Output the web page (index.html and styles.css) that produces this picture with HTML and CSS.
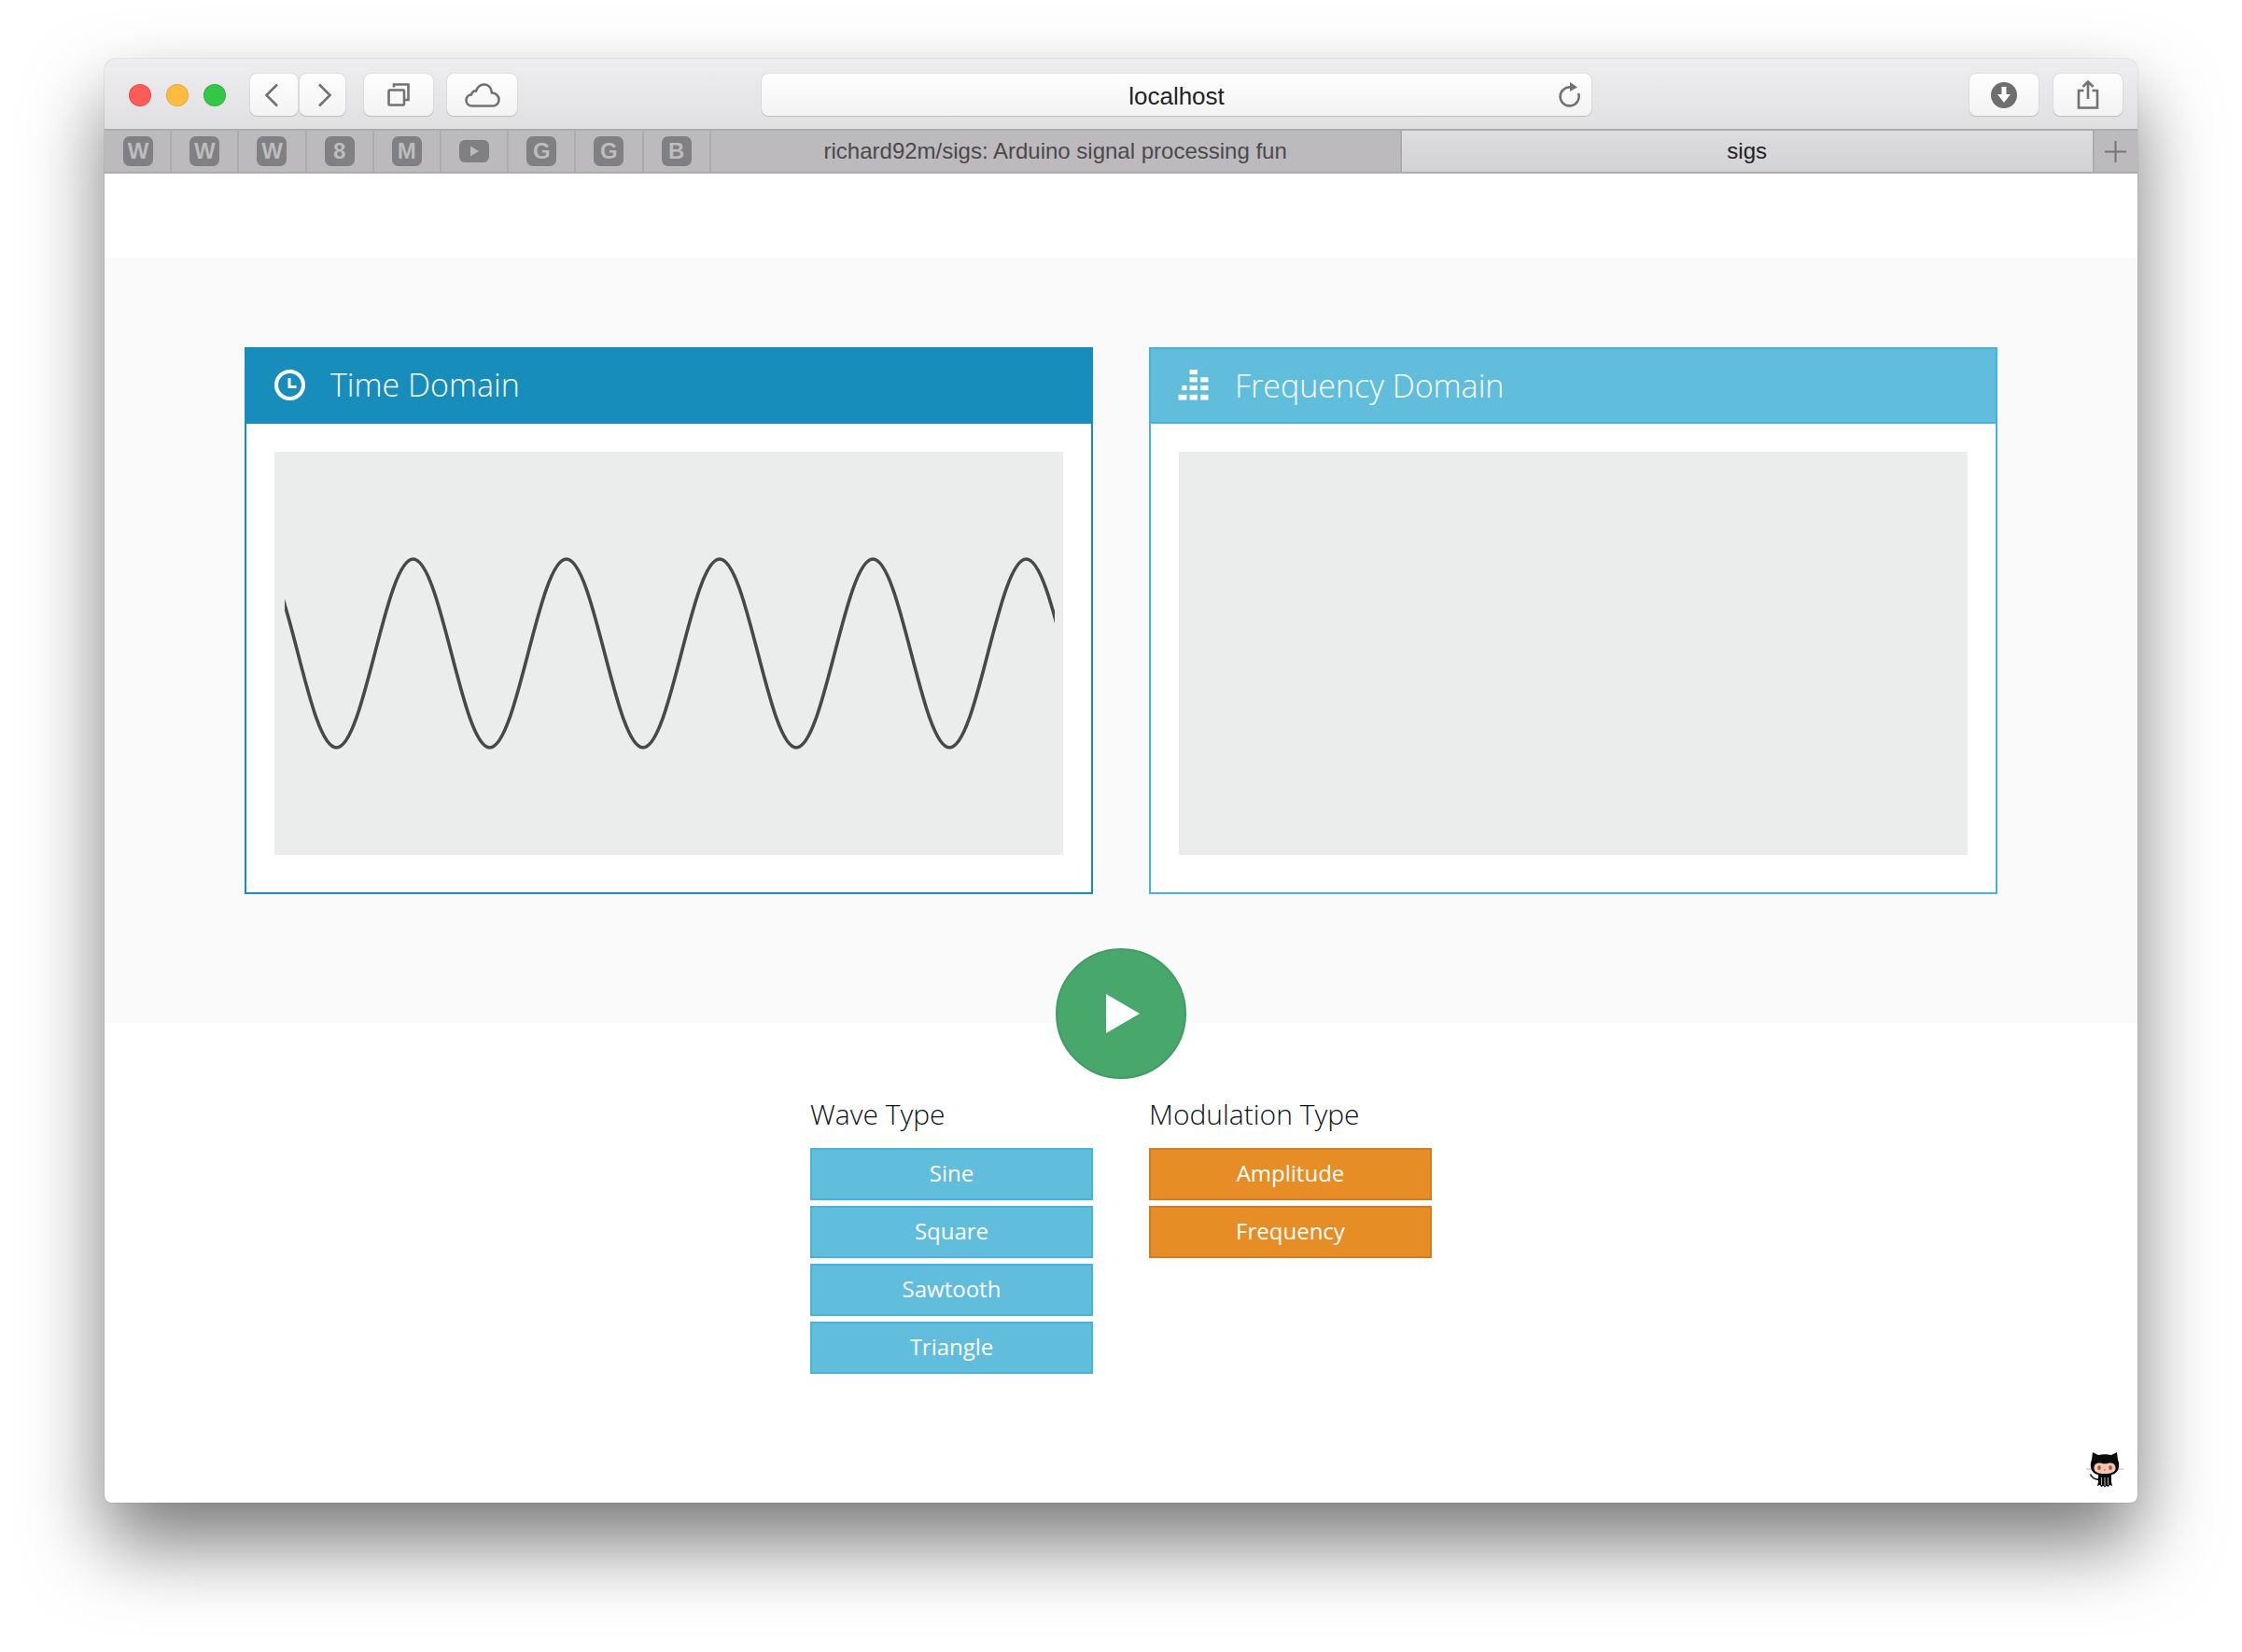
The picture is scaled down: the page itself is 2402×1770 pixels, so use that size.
FILE: index.html
```html
<!DOCTYPE html>
<html>
  <head>
    <meta charset="utf-8" />
    <title>sigs</title>
    <link rel="stylesheet" href="styles.css">
  </head>
  <body>
    <div class="window">
      <header class="toolbar">
        <div class="lights">
          <span class="light red"></span>
          <span class="light yellow"></span>
          <span class="light green"></span>
        </div>
        <div class="tool tool-back">
          <svg class="icon" width="16" height="26" viewBox="0 0 16 26"><path d="M14 1.5 L2.5 13 L14 24.5"/></svg>
        </div>
        <div class="tool tool-forward">
          <svg class="icon" width="16" height="26" viewBox="0 0 16 26"><path d="M2 1.5 L13.5 13 L2 24.5"/></svg>
        </div>
        <div class="tool tool-tabs">
          <svg class="icon" width="24" height="25" viewBox="0 0 24 25"><path d="M7 4.5 V1.5 H22.5 V18 H19"/><rect x="1.5" y="7.5" width="16.5" height="16" rx="1"/></svg>
        </div>
        <div class="tool tool-cloud">
          <svg class="icon" width="38" height="26" viewBox="0 0 38 26"><path d="M8 24.5 C3.5 24.5 1.5 21.5 1.5 18.5 C1.5 15 4 12.5 7 12.5 C7.5 9.5 10 8 12 8.5 C14 3.5 17.5 1.5 20.5 1.5 C25.5 1.5 28.5 5.5 29 10.5 C33.5 10.5 36.5 14 36.5 18 C36.5 21.5 33.5 24.5 30 24.5 Z"/></svg>
        </div>
        <div class="address">
          <span></span>
          <span class="address-text">localhost</span>
          <svg class="icon reload" width="25" height="27" viewBox="0 0 25 27"><path d="M14 5.5 A10 10 0 1 0 22 12"/><path class="solid" d="M13 0 L21 5.5 L13 10 Z"/></svg>
        </div>
        <div class="tool tool-download">
          <svg width="28" height="28" viewBox="0 0 28 28"><circle cx="14" cy="14" r="14" fill="#6f6f6f"/><path d="M11.5 5 H16.5 V13 H21 L14 22 L7 13 H11.5 Z" fill="#fbfbfb"/></svg>
        </div>
        <div class="tool tool-share">
          <svg class="icon" width="24" height="31" viewBox="0 0 24 31"><path d="M7.5 11 H2 V29.5 H22 V11 H16.5"/><path d="M12 20 V2 M6.5 7 L12 1.5 L17.5 7"/></svg>
        </div>
      </header>
      <nav class="tabs">
        <div class="pin"><span class="badge">W</span></div>
        <div class="pin"><span class="badge">W</span></div>
        <div class="pin"><span class="badge">W</span></div>
        <div class="pin"><span class="badge">8</span></div>
        <div class="pin"><span class="badge">M</span></div>
        <div class="pin">
          <svg width="32" height="24" viewBox="0 0 32 24"><rect width="32" height="24" rx="6" fill="#807f81"/><path d="M12 6.5 L21 12 L12 17.5 Z" fill="#bcbabd"/></svg>
        </div>
        <div class="pin"><span class="badge">G</span></div>
        <div class="pin"><span class="badge">G</span></div>
        <div class="pin"><span class="badge">B</span></div>
        <div class="tab">richard92m/sigs: Arduino signal processing fun</div>
        <div class="tab tab-active">sigs</div>
        <div class="tab-add">
          <svg width="23" height="23" viewBox="0 0 23 23"><path d="M0 11.5 H23 M11.5 0 V23" stroke="#757575" stroke-width="2"/></svg>
        </div>
      </nav>

      <main class="page">
        <section class="stage">
          <div class="panels">
            <article class="panel panel-time">
              <h2 class="panel-head">
                <svg class="panel-icon" width="33" height="33" viewBox="0 0 33 33"><circle cx="16.5" cy="16.5" r="14.5" fill="none" stroke="#fff" stroke-width="4"/><path d="M16 9 V18.5 H23.5" fill="none" stroke="#fff" stroke-width="3"/></svg>
                Time Domain
              </h2>
              <div class="panel-body">
                <div class="plot">
                  <svg class="wave" width="825" height="432" viewBox="305 483 825 432">
                    <path d="M278.4 598 C308.3 598 329.9 800 360.5 800 C390.4 800 412.7 598 442.6 598 C472.5 598 494.8 800 524.7 800 C554.6 800 576.9 598 606.8 598 C636.7 598 659 800 688.9 800 C718.8 800 741.1 598 771 598 C800.9 598 823.2 800 853.1 800 C883 800 905.3 598 935.2 598 C965.1 598 987.4 800 1017.3 800 C1047.2 800 1069.5 598 1099.4 598 C1129.3 598 1151.6 800 1181.5 800"/>
                  </svg>
                </div>
              </div>
            </article>
            <article class="panel panel-freq">
              <h2 class="panel-head">
                <svg class="panel-icon" width="33" height="33" viewBox="0 0 31 32" fill="#fff"><rect x="11.7" y="0" width="8" height="5"/><rect x="11.7" y="8" width="8" height="5"/><rect x="23" y="8" width="8" height="5"/><rect x="3.7" y="16.5" width="5" height="5"/><rect x="11.7" y="16.5" width="8" height="5"/><rect x="23" y="16.5" width="8" height="5"/><rect x="0" y="26" width="8.7" height="5.5"/><rect x="11.7" y="26" width="8" height="5.5"/><rect x="23" y="26" width="8" height="5.5"/></svg>
                Frequency Domain
              </h2>
              <div class="panel-body">
                <div class="plot"></div>
              </div>
            </article>
          </div>
          <button class="play">
            <svg width="36" height="42" viewBox="0 0 36 42"><path d="M0 0 L36 21 L0 42 Z" fill="#fff"/></svg>
          </button>
        </section>

        <section class="controls">
          <div class="group">
            <h3>Wave Type</h3>
            <button class="btn btn-wave">Sine</button>
            <button class="btn btn-wave">Square</button>
            <button class="btn btn-wave">Sawtooth</button>
            <button class="btn btn-wave">Triangle</button>
          </div>
          <div class="group">
            <h3>Modulation Type</h3>
            <button class="btn btn-mod">Amplitude</button>
            <button class="btn btn-mod">Frequency</button>
          </div>
        </section>

        <svg class="octocat" width="40" height="39" viewBox="0 0 40 39">
          <path d="M0 19 H6 M34 19 H40" stroke="#cfcfcf" stroke-width="1.5"/>
          <path d="M4.5 24.5 C6 28 9 30 13 30" fill="none" stroke="#222" stroke-width="1.8"/>
          <path d="M13 24 H27 V33 L28 37 L25 36 L24 38 L21.5 37 L20 38.5 L18.5 37 L16 38 L15 36 L12 37 L13 33 Z" fill="#0b0b0b"/>
          <path d="M16.5 28 V36 M20 28 V37 M23.5 28 V36" stroke="#dcdcdc" stroke-width="0.8"/>
          <path d="M7 1 L13 4 C17 3 23 3 27 4 L33 1 L34 9 C35.5 12 35.5 16 34.5 19 C33 24 27 26 20 26 C13 26 7 24 5.5 19 C4.5 16 4.5 12 6 9 Z" fill="#0b0b0b"/>
          <path d="M8.5 18 C8.5 14 11 12.5 14 12.5 C16.5 12.5 18 13.3 20 13.3 C22 13.3 23.5 12.5 26 12.5 C29 12.5 31.5 14 31.5 18 C31.5 22 27 24 20 24 C13 24 8.5 22 8.5 18 Z" fill="#f5c8ae"/>
          <ellipse cx="14" cy="17.5" rx="1.8" ry="2.5" fill="#b0564f"/>
          <ellipse cx="26" cy="17.5" rx="1.8" ry="2.5" fill="#b0564f"/>
          <circle cx="20" cy="20" r="0.8" fill="#b0564f"/>
        </svg>
      </main>
    </div>
  </body>
</html>
```

FILE: styles.css
```css
html,
body {
  margin: 0;
  padding: 0;
  height: 100%;
  overflow: hidden;
}
body {
  background-color: #fff;
  padding: 63px 112px 0;
  font-family: 'Open Sans', sans-serif;
}

.window {
  position: relative;
  height: 1547px;
  border-radius: 12px 12px 7px 7px;
  background-color: #fff;
  box-shadow: 0 0 1px rgba(0, 0, 0, 0.55), 0 44px 84px rgba(0, 0, 0, 0.52);
}

/* browser chrome */
.toolbar {
  display: flex;
  align-items: center;
  box-sizing: border-box;
  height: 75px;
  padding: 2px 16px 0 26px;
  border-radius: 12px 12px 0 0;
  background: linear-gradient(#eeedef, #e0dfe1);
}
.lights {
  display: flex;
  gap: 16px;
  margin-right: 26px;
}
.light {
  width: 24px;
  height: 24px;
  border-radius: 50%;
  box-sizing: border-box;
  border: 1px solid rgba(0, 0, 0, 0.1);
}
.red { background-color: #fc5b57; }
.yellow { background-color: #fdbc40; }
.green { background-color: #33c748; }

.tool,
.address {
  display: flex;
  align-items: center;
  justify-content: center;
  box-sizing: border-box;
  height: 45px;
  border-radius: 7px;
  background: linear-gradient(#fefefe, #f3f3f3);
  box-shadow: 0 0 1px rgba(0, 0, 0, 0.45), 0 1px 1px rgba(0, 0, 0, 0.12);
}
.tool-back { width: 51px; margin-right: 2px; padding-right: 5px; }
.tool-forward { width: 49px; margin-right: 20px; padding-left: 5px; }
.tool-tabs { width: 74px; margin-right: 15px; }
.tool-cloud { width: 75px; margin-right: 262px; }
.tool-download { width: 74px; margin-left: auto; margin-right: 16px; }
.tool-share { width: 74px; }

.icon {
  fill: none;
  stroke: #727272;
  stroke-width: 2.6;
}
.icon .solid {
  fill: #727272;
  stroke: none;
}

.address {
  display: grid;
  grid-template-columns: 1fr auto 1fr;
  width: 889px;
  padding: 0 11px;
}
.address-text {
  margin-top: 3px;
  font-family: 'Liberation Sans', sans-serif;
  font-size: 26px;
  color: #222;
}
.reload {
  justify-self: end;
}

.tabs {
  display: flex;
  box-sizing: border-box;
  height: 48px;
  border-top: 2px solid #acabad;
  border-bottom: 2px solid #acabad;
  background-color: #bcbabd;
  font-family: 'Liberation Sans', sans-serif;
}
.pin {
  display: flex;
  flex: none;
  align-items: center;
  justify-content: center;
  box-sizing: border-box;
  width: 72.2px;
  border-right: 2px solid #acabad;
}
.pin:first-child {
  padding-left: 2px;
}
.badge {
  width: 32px;
  height: 32px;
  border-radius: 7px;
  background-color: #807f81;
  color: #bdbcbe;
  font-size: 24px;
  font-weight: 700;
  line-height: 32px;
  text-align: center;
}
.tab {
  flex: none;
  box-sizing: border-box;
  width: 740px;
  border-right: 2px solid #acabad;
  color: #4a494b;
  font-size: 24px;
  line-height: 44px;
  text-align: center;
}
.tab-active {
  width: 742px;
  background: linear-gradient(#dcdbdd, #d3d2d4);
  color: #222;
}
.tab-add {
  display: flex;
  flex: 1;
  align-items: center;
  justify-content: center;
}

/* page */
.page {
  padding-top: 90px;
}
.stage {
  display: flex;
  flex-direction: column;
  align-items: center;
  height: 820px;
  box-sizing: border-box;
  padding: 96px 150px 0;
  background-color: #fafafa;
}
.panels {
  display: grid;
  grid-template-columns: 909px 909px;
  gap: 60px;
}
.panel {
  box-sizing: border-box;
  height: 586px;
  border: 2px solid #178dbb;
  background-color: #fff;
}
.panel-head {
  display: flex;
  align-items: center;
  gap: 27px;
  box-sizing: border-box;
  height: 80px;
  margin: 0;
  padding: 0 30px 4px;
  background-color: #178dbb;
  color: #fff;
  font-size: 34px;
  font-weight: 300;
}
.panel-freq {
  border-color: #44b5d7;
}
.panel-freq .panel-head {
  padding-bottom: 1px;
  padding-left: 29px;
  border-bottom: 2px solid #44b5d7;
  background-color: #60bddc;
}
.panel-freq .panel-icon {
  margin-right: 1px;
}
.panel-body {
  padding: 30px;
}
.plot {
  box-sizing: border-box;
  height: 432px;
  padding-left: 11px;
  background-color: #ebeded;
}
.wave {
  display: block;
}
.wave path {
  fill: none;
  stroke: #484848;
  stroke-width: 3.6;
}

.play {
  display: flex;
  flex: none;
  align-items: center;
  justify-content: center;
  box-sizing: border-box;
  width: 140px;
  height: 140px;
  margin-top: 58px;
  padding: 0 0 0 3px;
  border: 2px solid #409c64;
  border-radius: 50%;
  background-color: #48a86b;
}

.controls {
  display: grid;
  grid-template-columns: 303px 303px;
  justify-content: center;
  gap: 60px;
  padding-top: 77px;
}
.group h3 {
  margin: 0 0 16px;
  color: #0a121a;
  font-size: 30px;
  font-weight: 300;
  line-height: 41px;
  white-space: nowrap;
}
.btn {
  display: block;
  box-sizing: border-box;
  width: 100%;
  height: 56px;
  margin-bottom: 6px;
  padding: 0 0 3px;
  border: 2px solid;
  border-radius: 0;
  color: #fff;
  font-family: inherit;
  font-size: 24px;
}
.btn-wave {
  border-color: #44b5d7;
  background-color: #60bddc;
}
.btn-mod {
  border-color: #d27d1e;
  background-color: #e68d26;
}

.octocat {
  position: absolute;
  right: 15px;
  bottom: 16px;
}
```
